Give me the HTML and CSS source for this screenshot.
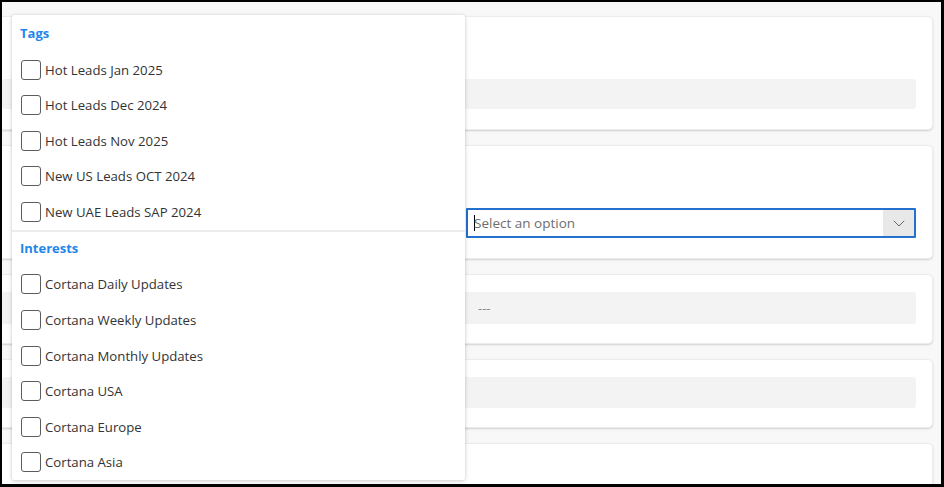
FILE: index.html
```html
<!DOCTYPE html>
<html lang="en">
<head>
<meta charset="utf-8">
<title>Form</title>
<link rel="stylesheet" href="styles.css">
</head>
<body>
<div class="frame">
  <div class="page">
    <section class="card card-tall">
      <div class="field"></div>
    </section>
    <section class="card card-tall">
      <div class="select">
        <span class="caret"></span>
        <span class="placeholder">Select an option</span>
        <span class="chev">
          <svg width="12" height="7" viewBox="0 0 12 7"><path d="M0.8 0.8 L6 6 L11.2 0.8" fill="none" stroke="#666" stroke-width="1"/></svg>
        </span>
      </div>
    </section>
    <section class="card card-short">
      <div class="field field-text">---</div>
    </section>
    <section class="card card-short">
      <div class="field field-b"></div>
    </section>
    <section class="card card-tall">
      <div class="field"></div>
    </section>
  </div>

  <div class="dropdown">
    <div class="group-title">Tags</div>
    <label class="opt"><span class="box"></span><span>Hot Leads Jan 2025</span></label>
    <label class="opt"><span class="box"></span><span>Hot Leads Dec 2024</span></label>
    <label class="opt"><span class="box"></span><span>Hot Leads Nov 2025</span></label>
    <label class="opt"><span class="box"></span><span>New US Leads OCT 2024</span></label>
    <label class="opt"><span class="box"></span><span>New UAE Leads SAP 2024</span></label>
    <div class="sep"></div>
    <div class="group-title group-second">Interests</div>
    <label class="opt"><span class="box"></span><span>Cortana Daily Updates</span></label>
    <label class="opt"><span class="box"></span><span>Cortana Weekly Updates</span></label>
    <label class="opt"><span class="box"></span><span>Cortana Monthly Updates</span></label>
    <label class="opt"><span class="box"></span><span>Cortana USA</span></label>
    <label class="opt"><span class="box"></span><span>Cortana Europe</span></label>
    <label class="opt"><span class="box"></span><span>Cortana Asia</span></label>
  </div>
</div>
</body>
</html>
```

FILE: styles.css
```css
* { box-sizing: border-box; }
html, body { margin: 0; padding: 0; }
body {
  font-family: "Segoe UI", "Open Sans", "Noto Sans", sans-serif;
  font-size: 13px;
  color: #323130;
  background: #000;
}
.frame {
  position: relative;
  width: 944px;
  height: 487px;
  border-style: solid;
  border-color: #000;
  border-width: 2px 3px 3px 2px;
  background: #f8f8f8;
  overflow: hidden;
}
.page {
  display: flex;
  flex-direction: column;
  gap: 15px;
  padding: 14px 8px 0 0;
}
.card {
  background: #fff;
  border: 1px solid #ececec;
  border-left: none;
  border-radius: 0 5px 5px 0;
  box-shadow: 0 1px 2px rgba(0,0,0,0.16);
  padding: 0 16px 0 0;
}
.card-tall { padding-top: 62px; padding-bottom: 20px; }
.card-short { padding-top: 17px; padding-bottom: 19px; }
.card-tall .field { height: 30px; }
.card-short .field { height: 32px; }
.card-short .field-b { height: 31px; }
.field {
  background: #f3f3f3;
  border-radius: 3px;
}
.field-text {
  padding-left: 476px;
  line-height: 32px;
  color: #8a8a8a;
  font-size: 13px;
}
.select {
  margin-left: 464px;
  height: 30px;
  border: 2px solid #2470cc;
  border-radius: 1px;
  display: flex;
  align-items: center;
  background: #fff;
}
.caret {
  width: 1px;
  height: 16px;
  background: #000;
  margin-left: 6px;
}
.placeholder {
  flex: 1;
  color: #6e6e6e;
  font-size: 13.5px;
  margin-left: -1px;
}
.chev {
  width: 31px;
  height: 100%;
  background: #e8e8e8;
  display: flex;
  align-items: center;
  justify-content: center;
}
.dropdown {
  position: absolute;
  left: 10px;
  top: 13px;
  width: 453px;
  height: 465px;
  background: #fff;
  border-radius: 2px;
  box-shadow: 0 0 3px rgba(0,0,0,0.14), 0 2px 5px rgba(0,0,0,0.12);
  display: flex;
  flex-direction: column;
}
.group-title {
  height: 37px;
  padding: 9px 0 0 8px;
  color: #1f86ea;
  font-weight: 700;
  font-size: 13px;
}
.group-second { height: 35px; padding-top: 7px; }
.opt {
  height: 35.6px;
  display: flex;
  align-items: center;
  padding-left: 9px;
  gap: 4px;
  font-size: 13.2px;
  color: #333;
}
.box {
  width: 20px;
  height: 20px;
  border: 1px solid #5c5c5c;
  border-radius: 3px;
  flex: none;
}
.sep {
  height: 2px;
  background: #ececec;
}
```
